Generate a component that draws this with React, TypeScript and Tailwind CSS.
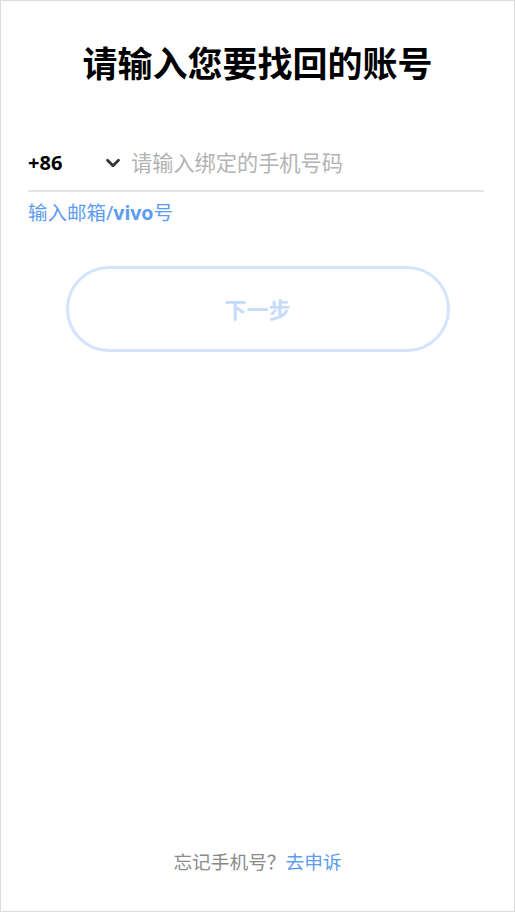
import { ChevronDown } from 'lucide-react';

export default function App() {
  return (
    <div
      className="w-[515px] h-[912px] border border-[#dcdcdc] bg-white flex flex-col"
      style={{ fontFamily: '"Noto Sans", "Noto Sans CJK SC", sans-serif' }}
    >
      <h1 className="mt-[41px] text-center text-[35px] leading-[44px] font-bold text-black">
        请输入您要找回的账号
      </h1>

      <div className="mt-[50px] ml-[27px] w-[456px] h-[56px] flex items-center border-b-2 border-[#e4e4e4]">
        <span className="w-[74px] text-[20px] font-bold text-black">+86</span>
        <ChevronDown className="w-[22px] h-[22px] text-[#333]" strokeWidth={3} />
        <input
          className="ml-[7px] flex-1 outline-none text-[21.2px] placeholder:text-[#b3b3b3] bg-transparent"
          placeholder="请输入绑定的手机号码"
        />
      </div>

      <div className="ml-[27px] mt-[8px] text-[19.5px] leading-[26px] text-[#5c9cf2]">
        输入邮箱/<span className="font-bold">vivo</span>号
      </div>

      <button className="mx-auto mt-[40px] w-[384px] h-[86px] rounded-full border-[3px] border-[#d3e4fc] text-[22px] font-bold text-[#c6dbfb] bg-white">
        下一步
      </button>

      <div className="mt-auto mb-[36px] text-center text-[18.7px] leading-[26px] text-[#8a8a8a]">
        忘记手机号？<span className="text-[#5c9cf2]">去申诉</span>
      </div>
    </div>
  );
}
